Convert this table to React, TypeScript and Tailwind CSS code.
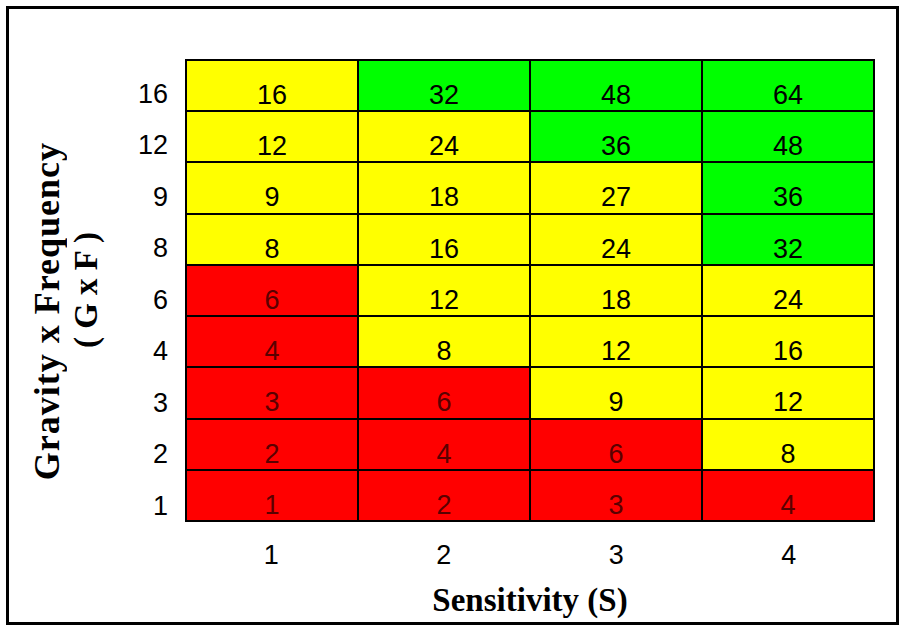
type Level = "r" | "y" | "g";

const rowLabels = [16, 12, 9, 8, 6, 4, 3, 2, 1];
const colLabels = [1, 2, 3, 4];

// colour per row, top to bottom, for S = 1..4
const levels: Level[][] = [
  ["y", "g", "g", "g"],
  ["y", "y", "g", "g"],
  ["y", "y", "y", "g"],
  ["y", "y", "y", "g"],
  ["r", "y", "y", "y"],
  ["r", "y", "y", "y"],
  ["r", "r", "y", "y"],
  ["r", "r", "r", "y"],
  ["r", "r", "r", "r"],
];

const cellClass: Record<Level, string> = {
  r: "bg-[#ff0000] text-[#5a0000]",
  y: "bg-[#ffff00] text-black",
  g: "bg-[#00ff00] text-black",
};

const sans = "font-['Liberation_Sans',Arial,sans-serif]";
const serif = "font-['Liberation_Serif','Times_New_Roman',serif] font-bold";

export default function App() {
  return (
    <div className="h-[625px] w-[900px] overflow-hidden bg-white pl-[6px] pt-[6px]">
      <div className="flex h-[619px] w-[893px] border-[3px] border-black">
        {/* axis title */}
        <div className={`flex w-[100px] items-start pl-[19px] text-black ${serif}`}>
          <div className="mt-[133px] rotate-180 text-[36px] leading-[39px] tracking-[1px] [writing-mode:vertical-rl]">
            Gravity x Frequency
          </div>
          <div className="mt-[223px] rotate-180 text-[33px] leading-[39px] [writing-mode:vertical-rl]">
            ( G x F )
          </div>
        </div>

        <div className="flex flex-col pt-[50px]">
          <div className="flex">
            <div className={`flex w-[76px] flex-col pr-[17px] text-right text-[27px] text-black ${sans}`}>
              {rowLabels.map((v) => (
                <div key={v} className="h-[51.44px] pt-[22px] leading-none">
                  {v}
                </div>
              ))}
            </div>
            <div className="grid h-[463px] w-[690px] grid-cols-4 grid-rows-9 gap-[2px] bg-black p-[2px]">
              {rowLabels.map((g, r) =>
                colLabels.map((s, c) => (
                  <div
                    key={`${r}-${c}`}
                    className={`flex justify-center pt-[21px] text-[27px] leading-none ${sans} ${cellClass[levels[r][c]]}`}
                  >
                    {g * s}
                  </div>
                ))
              )}
            </div>
          </div>

          <div className={`flex pl-[76px] pt-[20px] text-[27px] leading-none text-black ${sans}`}>
            {colLabels.map((s) => (
              <div key={s} className="w-[172.5px] text-center">
                {s}
              </div>
            ))}
          </div>

          <div className={`pl-[76px] pt-[15px] ${serif}`}>
            <div className="w-[690px] text-center text-[33px] leading-none text-black">
              Sensitivity (S)
            </div>
          </div>
        </div>
      </div>
    </div>
  );
}
